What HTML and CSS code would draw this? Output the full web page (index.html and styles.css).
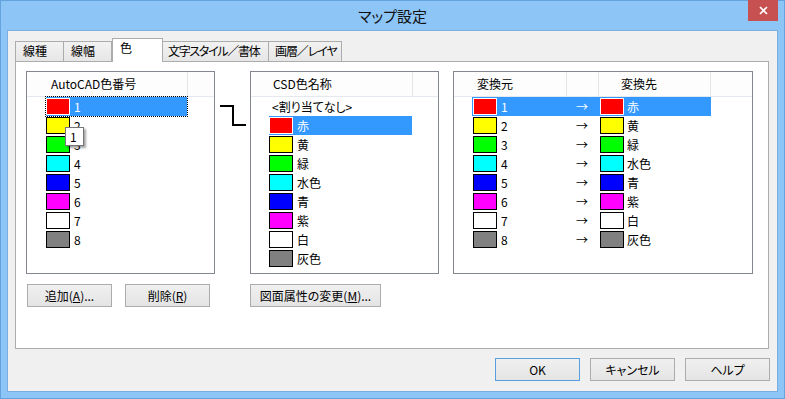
FILE: index.html
```html
<!DOCTYPE html>
<html>
<head>
    <meta charset="utf-8">
    <title>マップ設定</title>
    <link rel="stylesheet" href="styles.css">
</head>
<body>
<div class="window">
    <div class="titlebar">
        <span></span>
        <span class="title">マップ設定</span>
        <button class="close">
            <svg width="9" height="9" viewBox="0 0 9 9"><path d="M1 1L8 8M8 1L1 8" stroke="#fff" stroke-width="1.7" fill="none"/></svg>
        </button>
    </div>
    <div class="client">
        <div class="tabs">
            <div class="tab tab-line">線種</div>
            <div class="tab tab-width">線幅</div>
            <div class="tab tab-color active">色</div>
            <div class="tab tab-text">文字スタイル／書体</div>
            <div class="tab tab-layer">画層／レイヤ</div>
        </div>
        <div class="panel">
            <div class="list list-src">
                <div class="list-head">
                    <div class="head-cell src-col">AutoCAD色番号</div>
                </div>
                <div class="row selected focused"><span class="swatch red"></span>1</div>
                <div class="row"><span class="swatch yellow"></span>2</div>
                <div class="row"><span class="swatch green"></span>3</div>
                <div class="row"><span class="swatch cyan"></span>4</div>
                <div class="row"><span class="swatch blue"></span>5</div>
                <div class="row"><span class="swatch magenta"></span>6</div>
                <div class="row"><span class="swatch white"></span>7</div>
                <div class="row"><span class="swatch gray"></span>8</div>
                <div class="tip">1</div>
            </div>

            <svg class="link" width="35" height="203" viewBox="0 0 35 203">
                <path d="M5 35H18V54H31" stroke="#000" stroke-width="2" fill="none" shape-rendering="crispEdges"/>
            </svg>

            <div class="list list-dst">
                <div class="list-head">
                    <div class="head-cell dst-col">CSD色名称</div>
                </div>
                <div class="row none">&lt;割り当てなし&gt;</div>
                <div class="row selected"><span class="swatch red"></span>赤</div>
                <div class="row"><span class="swatch yellow"></span>黄</div>
                <div class="row"><span class="swatch green"></span>緑</div>
                <div class="row"><span class="swatch cyan"></span>水色</div>
                <div class="row"><span class="swatch blue"></span>青</div>
                <div class="row"><span class="swatch magenta"></span>紫</div>
                <div class="row"><span class="swatch white"></span>白</div>
                <div class="row"><span class="swatch gray"></span>灰色</div>
            </div>

            <div class="list list-map">
                <div class="list-head">
                    <div class="head-cell map-from">変換元</div>
                    <div class="head-cell map-arrow"></div>
                    <div class="head-cell map-to">変換先</div>
                </div>
                <div class="row selected">
                    <span class="cell-from"><span class="swatch red"></span>1</span>
                    <span class="cell-arrow">→</span>
                    <span class="cell-to"><span class="swatch red"></span>赤</span>
                </div>
                <div class="row">
                    <span class="cell-from"><span class="swatch yellow"></span>2</span>
                    <span class="cell-arrow">→</span>
                    <span class="cell-to"><span class="swatch yellow"></span>黄</span>
                </div>
                <div class="row">
                    <span class="cell-from"><span class="swatch green"></span>3</span>
                    <span class="cell-arrow">→</span>
                    <span class="cell-to"><span class="swatch green"></span>緑</span>
                </div>
                <div class="row">
                    <span class="cell-from"><span class="swatch cyan"></span>4</span>
                    <span class="cell-arrow">→</span>
                    <span class="cell-to"><span class="swatch cyan"></span>水色</span>
                </div>
                <div class="row">
                    <span class="cell-from"><span class="swatch blue"></span>5</span>
                    <span class="cell-arrow">→</span>
                    <span class="cell-to"><span class="swatch blue"></span>青</span>
                </div>
                <div class="row">
                    <span class="cell-from"><span class="swatch magenta"></span>6</span>
                    <span class="cell-arrow">→</span>
                    <span class="cell-to"><span class="swatch magenta"></span>紫</span>
                </div>
                <div class="row">
                    <span class="cell-from"><span class="swatch white"></span>7</span>
                    <span class="cell-arrow">→</span>
                    <span class="cell-to"><span class="swatch white"></span>白</span>
                </div>
                <div class="row">
                    <span class="cell-from"><span class="swatch gray"></span>8</span>
                    <span class="cell-arrow">→</span>
                    <span class="cell-to"><span class="swatch gray"></span>灰色</span>
                </div>
            </div>

            <div class="src-buttons">
                <button class="btn">追加(<u>A</u>)...</button>
                <button class="btn">削除(<u>R</u>)</button>
            </div>
            <div class="dst-buttons">
                <button class="btn btn-wide">図面属性の変更(<u>M</u>)...</button>
            </div>
        </div>
        <div class="dialog-buttons">
            <button class="btn btn-default">OK</button>
            <button class="btn">キャンセル</button>
            <button class="btn">ヘルプ</button>
        </div>
    </div>
</div>
</body>
</html>
```

FILE: styles.css
```css
* {
    box-sizing: border-box;
}
body {
    margin: 0;
    font-family: "Noto Sans CJK JP", sans-serif;
    font-size: 12px;
    font-feature-settings: "palt";
    color: #000;
}
.window {
    width: 785px;
    height: 399px;
    background: #8cc5f6;
    border: 1px solid #64a3dd;
    padding: 0 6px 6px 6px;
    display: flex;
    flex-direction: column;
}
.titlebar {
    height: 29px;
    display: grid;
    grid-template-columns: 1fr auto 1fr;
    align-items: center;
}
.title {
    font-size: 15px;
    color: #111;
}
.close {
    justify-self: end;
    align-self: start;
    margin-top: -1px;
    width: 30px;
    height: 21px;
    padding: 0;
    border: none;
    background: #c75050;
    display: flex;
    align-items: center;
    justify-content: center;
}
.client {
    flex: 1;
    background: #f0f0f0;
    border: 1px solid #78afe0;
    padding: 7px 8px 0 7px;
}

/* tabs */
.tabs {
    display: flex;
    align-items: flex-end;
    height: 23px;
}
.tab {
    height: 20px;
    line-height: 18px;
    padding-left: 7px;
    white-space: nowrap;
    overflow: hidden;
    border: 1px solid #acacac;
    border-left: none;
    border-bottom: none;
    background: linear-gradient(#f2f2f2, #e6e6e6);
}
.tab:first-child {
    border-left: 1px solid #acacac;
}
.tab.active {
    height: 24px;
    margin-bottom: -1px;
    border-left: 1px solid #acacac;
    background: #fff;
    position: relative;
    z-index: 1;
}
.tab-line { width: 49px; }
.tab-width { width: 48px; }
.tab-color { width: 51px; }
.tab-text { width: 106px; padding-left: 5px; letter-spacing: -1.3px; }
.tab-layer { width: 73px; padding-left: 6px; letter-spacing: -1.1px; }

/* panel */
.panel {
    height: 288px;
    background: #fff;
    border: 1px solid #acacac;
    padding: 9px 0 0 10px;
    display: grid;
    grid-template-columns: 189px 35px 189px 14px 300px;
    grid-template-rows: 203px 23px;
    row-gap: 10px;
    align-content: start;
}
.list {
    border: 1px solid #828790;
    background: #fff;
    position: relative;
}
.list-src { grid-column: 1; }
.link { grid-column: 2; }
.list-dst { grid-column: 3; }
.list-map { grid-column: 5; }

.list-head {
    display: flex;
    height: 25px;
    border-bottom: 1px solid #e4e9f0;
    background: #fdfdfd;
}
.head-cell {
    line-height: 24px;
    border-right: 1px solid #e5e5e5;
    white-space: nowrap;
}
.src-col { width: 161px; padding-left: 24px; }
.dst-col { width: 162px; padding-left: 22px; }
.map-from { width: 113px; padding-left: 23px; }
.map-arrow { width: 32px; }
.map-to { width: 112px; padding-left: 22px; }

.row {
    height: 19px;
    line-height: 19px;
    display: flex;
    align-items: center;
    gap: 4px;
    white-space: nowrap;
}
.list-src .row { margin-left: 19px; width: 141px; }
.list-dst .row { margin-left: 18px; width: 143px; }
.list-dst .row.none { padding-left: 3px; }
.list-map .row {
    margin-left: 18px;
    width: 239px;
    display: grid;
    grid-template-columns: 94px 32px 1fr;
    gap: 0;
}
.row.selected {
    background: #3399ff;
    color: #fff;
}
.row.focused {
    outline: 1px dotted #000;
}
.cell-from {
    display: flex;
    align-items: center;
    gap: 4px;
    padding-left: 1px;
}
.cell-arrow {
    text-align: center;
}
.cell-to {
    display: flex;
    align-items: center;
    gap: 3px;
    padding-left: 2px;
}

.swatch {
    flex: none;
    width: 24px;
    height: 17px;
    border: 1px solid #000;
}
.row.selected .swatch {
    border-color: #fff;
}
.red { background: #ff0000; }
.yellow { background: #ffff00; }
.green { background: #00ff00; }
.cyan { background: #00ffff; }
.blue { background: #0000ff; }
.magenta { background: #ff00ff; }
.white { background: #ffffff; }
.gray { background: #808080; }

.tip {
    position: absolute;
    left: 38px;
    top: 55px;
    width: 19px;
    height: 19px;
    line-height: 17px;
    padding-left: 4px;
    background: #fff;
    border: 1px solid #767676;
    box-shadow: 2px 2px 2px rgba(0, 0, 0, 0.35);
}

/* buttons */
.btn {
    width: 85px;
    height: 23px;
    padding: 0;
    font-family: inherit;
    font-size: 12px;
    font-feature-settings: "palt";
    color: #000;
    border: 1px solid #acacac;
    background: linear-gradient(#f0f0f0, #e4e4e4);
}
.btn-wide {
    width: 131px;
}
.btn-default {
    border-color: #5a9fdd;
}
.src-buttons {
    grid-column: 1 / 3;
    display: flex;
    gap: 13px;
    padding-left: 1px;
}
.dst-buttons {
    grid-column: 3;
}
.dialog-buttons {
    display: flex;
    justify-content: flex-end;
    gap: 10px;
    margin-top: 9px;
    margin-right: -1px;
}
```
